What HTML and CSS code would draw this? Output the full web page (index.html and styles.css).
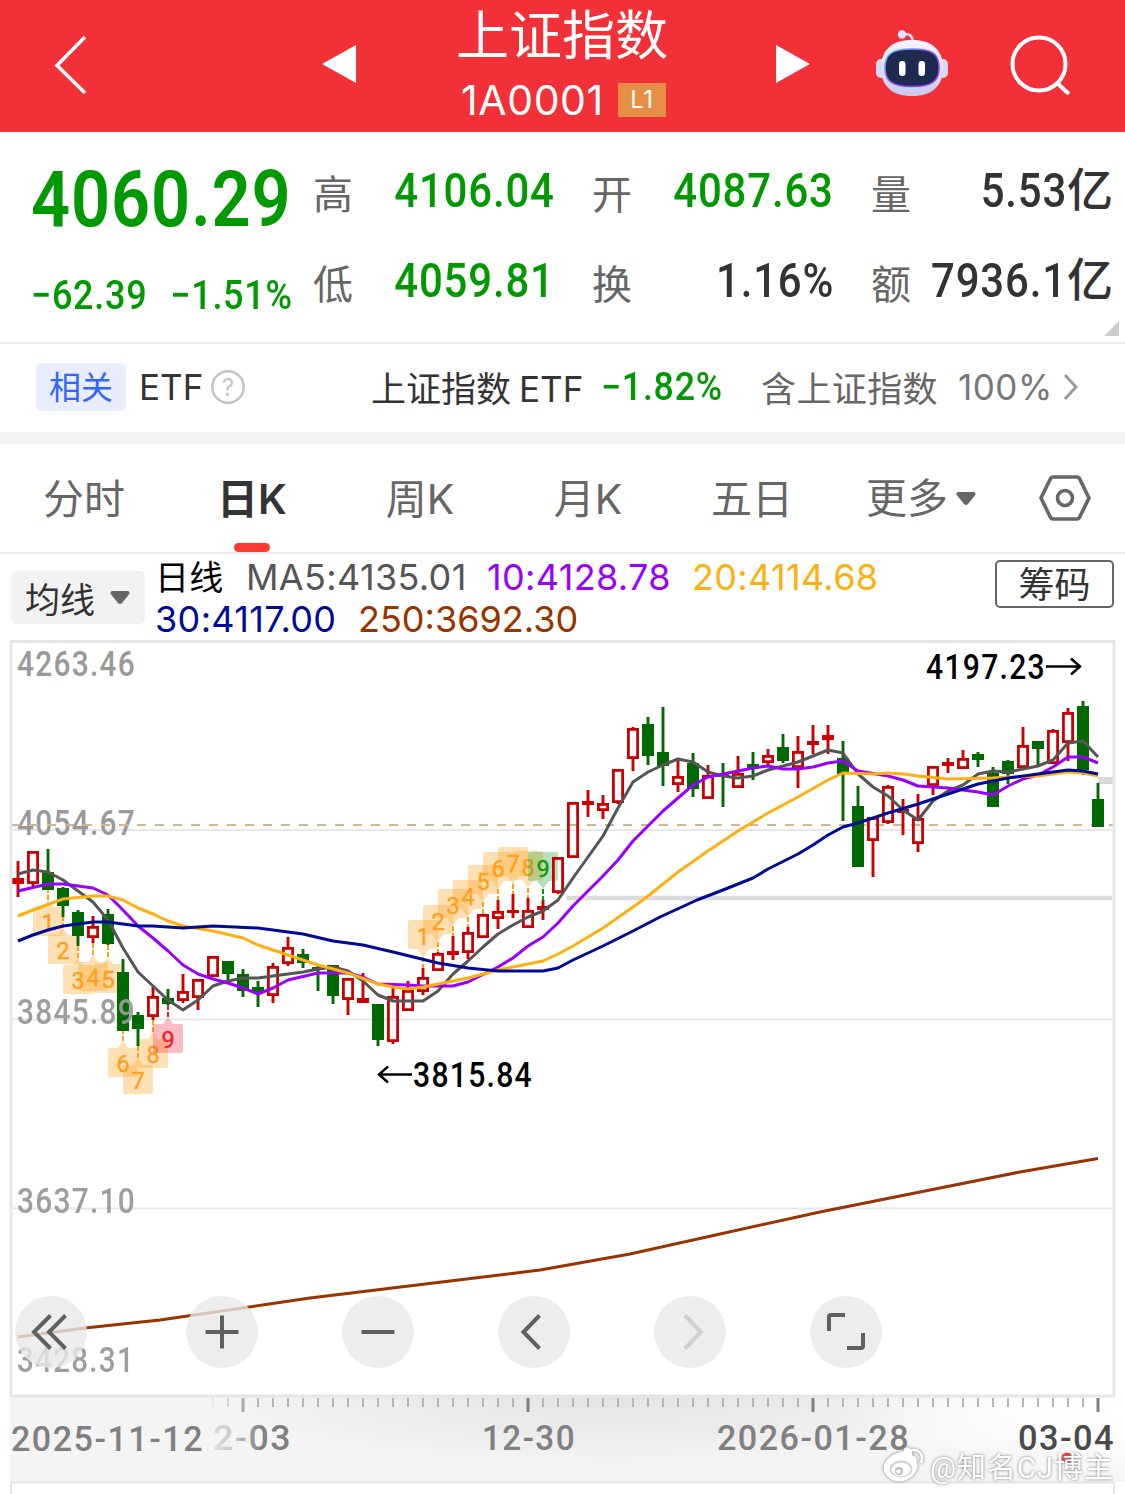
FILE: index.html
```html
<!DOCTYPE html>
<html lang="zh-CN">
<head>
<meta charset="utf-8">
<title>上证指数 1A0001</title>
<link rel="stylesheet" href="styles.css">
</head>
<body>
<header class="topbar">
  <svg class="back" width="34" height="60" viewBox="0 0 34 60"><path d="M32 2 4 30.500 32 58" fill="none" stroke="#fff" stroke-width="3.500"/></svg>
  <svg class="prev" width="34" height="38" viewBox="0 0 34 38"><path d="M34 0V38L0 19Z" fill="#fff"/></svg>
  <div class="heading">
    <h1>上证指数</h1>
    <div class="code"><span>1A0001</span><b>L1</b></div>
  </div>
  <svg class="next" width="34" height="38" viewBox="0 0 34 38"><path d="M0 0V38L34 19Z" fill="#fff"/></svg>
  <svg class="robot" width="74" height="68" viewBox="0 0 74 68">
    <defs>
      <linearGradient id="shell" x1="0" y1="0" x2="0" y2="1"><stop offset="0" stop-color="#f6f4ff"/><stop offset=".6" stop-color="#dddcf6"/><stop offset="1" stop-color="#c9c8ea"/></linearGradient>
      <linearGradient id="rim" x1="0" y1="0" x2="1" y2="1"><stop offset="0" stop-color="#58d3ee"/><stop offset=".45" stop-color="#8a4ff0"/><stop offset="1" stop-color="#7b36f5"/></linearGradient>
    </defs>
    <path d="M28 5Q38 4 37.500 13" fill="none" stroke="#e3e1f8" stroke-width="2.500"/>
    <circle cx="27" cy="5.500" r="4.200" fill="#e8e6fb"/>
    <rect x="1" y="30" width="12" height="19" rx="5" fill="#d9d8f3"/>
    <rect x="61" y="30" width="12" height="19" rx="5" fill="#d9d8f3"/>
    <path d="M37 11C57 11 68 21 68 39C68 57 57 67 37 67C17 67 6 57 6 39C6 21 17 11 37 11Z" fill="url(#shell)"/>
    <path d="M37 20C56 20 64 24 64 38.500C64 53 56 57.500 37 57.500C18 57.500 10 53 10 38.500C10 24 18 20 37 20Z" fill="#202a50" stroke="url(#rim)" stroke-width="1.600"/>
    <rect x="24" y="32" width="6.500" height="15" rx="3.200" fill="#fff"/>
    <rect x="43.500" y="32" width="6.500" height="15" rx="3.200" fill="#fff"/>
  </svg>
  <svg class="search" width="62" height="62" viewBox="0 0 62 62"><g fill="none" stroke="#fff" stroke-width="4"><circle cx="29" cy="29" r="26.500"/><path d="M47 48 59 59"/></g></svg>
</header>

<section class="quote">
  <div class="last">
    <div class="price">4060.29</div>
    <div class="change"><span>−62.39</span><span>−1.51%</span></div>
  </div>
  <dl class="stats">
    <dt>高</dt><dd class="down"><b>4106.04</b></dd><dt>开</dt><dd class="down"><b>4087.63</b></dd><dt>量</dt><dd><b>5.53</b><i>亿</i></dd>
    <dt>低</dt><dd class="down"><b>4059.81</b></dd><dt>换</dt><dd><b>1.16%</b></dd><dt>额</dt><dd><b>7936.1</b><i>亿</i></dd>
  </dl>
  <span class="corner"></span>
</section>

<section class="etf">
  <span class="tag">相关</span>
  <span class="etf-label">ETF</span>
  <svg class="help" width="36" height="36" viewBox="0 0 36 36"><circle cx="18" cy="18" r="15.800" fill="none" stroke="#c4c4c4" stroke-width="2.500"/><text x="18" y="26.500" text-anchor="middle" font-size="24">?</text></svg>
  <span class="etf-name">上证指数<em>ETF</em></span>
  <span class="etf-change">−1.82%</span>
  <span class="etf-hold">含上证指数</span>
  <span class="etf-pct">100%</span>
  <svg class="more" width="16" height="28" viewBox="0 0 16 28"><path d="M2 2 13 14 2 26" fill="none" stroke="#999" stroke-width="2.800"/></svg>
</section>

<nav class="tabs">
  <span>分时</span>
  <span class="active">日K</span>
  <span>周K</span>
  <span>月K</span>
  <span>五日</span>
  <span class="dropdown">更多<svg width="20" height="13" viewBox="0 0 20 13"><path d="M2 0H18Q21 1 18.500 4L12 12Q10 14 8 12L1.500 4Q-1 1 2 0Z" fill="#666"/></svg></span>
  <svg class="gear" width="54" height="48" viewBox="0 0 54 48"><g fill="none" stroke="#666" stroke-width="3.600"><path d="M15 3H39Q40.500 3 41.300 4.200L51 24L41.300 43.800Q40.500 45 39 45H15Q13.500 45 12.700 43.800L3 24L12.700 4.200Q13.500 3 15 3Z"/><circle cx="27" cy="24" r="7.500"/></g></svg>
</nav>

<section class="legend">
  <div class="indicator">均线<svg width="20" height="13" viewBox="0 0 20 13"><path d="M2 0H18Q21 1 18.500 4L12 12Q10 14 8 12L1.500 4Q-1 1 2 0Z" fill="#666"/></svg></div>
  <div class="averages">
    <div><span class="period">日线</span><span class="ma5">MA5:4135.01</span><span class="ma10">10:4128.78</span><span class="ma20">20:4114.68</span></div>
    <div><span class="ma30">30:4117.00</span><span class="ma250">250:3692.30</span></div>
  </div>
  <div class="chips">筹码</div>
</section>

<svg class="chart" width="1125" height="854" viewBox="0 640 1125 854">
  <defs>
    <radialGradient id="glow" gradientUnits="userSpaceOnUse" cx="0" cy="0" r="1" gradientTransform="translate(610 1397) scale(390 68)"><stop offset="0" stop-color="#e4e4e4"/><stop offset=".5" stop-color="#ebebeb"/><stop offset="1" stop-color="#f4f4f4"/></radialGradient>
    <radialGradient id="shine" gradientUnits="userSpaceOnUse" cx="0" cy="0" r="1" gradientTransform="translate(1125 1410) scale(290 75)"><stop offset="0" stop-color="#fff"/><stop offset=".4" stop-color="#fff" stop-opacity=".8"/><stop offset="1" stop-color="#fff" stop-opacity="0"/></radialGradient>
    <linearGradient id="fade" gradientUnits="userSpaceOnUse" x1="212" x2="262" y1="0" y2="0"><stop offset="0" stop-color="#e0e0e0"/><stop offset=".45" stop-color="#c4c4c4"/><stop offset="1" stop-color="#808080"/></linearGradient>
  </defs>

  <g stroke="#e8e8e8" stroke-width="2"><path d="M13 830H1112M13 1019.500H1112M13 1208.500H1112"/></g>
  <path d="M566 898H1112" stroke="#dcdcdc" stroke-width="4.500"/>
  <path d="M1098 780.500H1114" stroke="#d8d8d8" stroke-width="7"/>

  <g class="scale">
    <text x="17" y="676" textLength="119" lengthAdjust="spacingAndGlyphs">4263.46</text>
    <text x="17" y="835" textLength="119" lengthAdjust="spacingAndGlyphs">4054.67</text>
  </g>
  <path d="M11 825H1114" stroke="#d6b58a" stroke-width="2" stroke-dasharray="9 9"/>

  <g id="marks"></g>
  <g id="candles"></g>

  <g class="lines">
    <polyline stroke="#555" points="18,874 33,870 48,872 63,880 78,891 93,902 108,920 123,948 138,972 153,986 168,1000 183,1010 198,1000 213,986 228,981 243,978 258,978 273,976 288,974 303,972 318,969 333,967 348,971 363,981 378,995 393,1001 423,1001 438,991 453,974 468,961 483,947 498,934 513,925 528,917 543,911 558,900 573,878 588,857 603,836 618,808 633,782 648,772 663,765 678,759 693,762 708,772 723,776 738,778 753,776 768,770 783,766 798,762 813,756 828,750 843,753 858,774 873,787 888,796 903,810 918,820 933,801 948,791 963,785 978,774 993,771 1008,772 1023,769 1038,766 1053,760 1068,743 1083,741 1098,757"/>
    <polyline stroke="#9a00ff" points="18,891 48,884 63,884 93,888 108,895 123,910 138,926 153,938 168,951 183,965 198,974 213,979 228,983 243,988 258,994 273,988 288,980 318,973 348,973 363,977 378,984 408,985 423,986 453,986 468,982 498,967 513,958 528,946 543,937 558,923 573,906 603,876 618,860 633,841 663,811 693,785 708,777 738,771 753,768 768,766 783,769 798,769 813,767 828,763 843,761 858,771 888,776 903,780 918,786 948,788 978,792 993,795 1008,786 1023,779 1038,775 1053,767 1068,757 1083,757 1098,763"/>
    <polyline stroke="#ffb010" points="18,916 33,910 63,899 93,896 108,896 123,900 138,908 153,914 168,921 183,926 213,931 243,938 258,945 288,955 318,965 348,973 378,984 393,987 408,989 423,987 438,984 468,978 498,970 528,964 543,961 558,954 573,946 603,928 643,900 663,884 678,872 708,851 738,831 768,813 798,797 828,780 843,773 873,774 888,773 903,774 918,776 948,779 993,778 1008,777 1038,776 1068,772 1083,773 1098,776"/>
    <polyline stroke="#000a99" points="18,941 33,935 48,930 63,926 93,922 108,922 138,926 153,926 183,928 213,926 258,928 303,934 333,941 363,945 393,952 438,963 468,968 498,971 543,971 558,968 573,960 603,946 633,931 660,917 697,900 723,890 753,878 768,869 798,854 813,845 828,835 843,827 858,823 888,813 918,804 948,794 978,784 1008,778 1038,774 1068,770 1083,771 1098,774"/>
    <polyline stroke="#993300" points="18,1337 85,1328 160,1320 222,1311 310,1298 450,1281 540,1270 630,1254 720,1234 820,1212 920,1192 1020,1172 1098,1158.500"/>
  </g>

  <g class="scale over">
    <text x="17" y="1024" textLength="119" lengthAdjust="spacingAndGlyphs">3845.89</text>
    <text x="17" y="1213" textLength="119" lengthAdjust="spacingAndGlyphs">3637.10</text>
    <text x="17" y="1372" textLength="118" lengthAdjust="spacingAndGlyphs">3428.31</text>
  </g>

  <g class="extreme">
    <text x="926" y="679" textLength="120" lengthAdjust="spacingAndGlyphs">4197.23</text>
    <path d="M1046 666.500H1080M1071 658.500 1080 666.500 1071 674.500"/>
    <text x="413" y="1087" textLength="120" lengthAdjust="spacingAndGlyphs">3815.84</text>
    <path d="M412 1074.500H379M388 1066.500 379 1074.500 388 1082.500"/>
  </g>

  <g class="controls">
    <circle cx="51" cy="1332" r="36"/><circle cx="222" cy="1332" r="36"/><circle cx="378" cy="1332" r="36"/><circle cx="534" cy="1332" r="36"/><circle cx="690" cy="1332" r="36"/><circle cx="846" cy="1332" r="36"/>
    <path d="M50.500 1315.500 34 1332 50.500 1348.500M65.500 1315.500 49 1332 65.500 1348.500"/>
    <path d="M205.500 1332H238.500M222 1315.500V1348.500M361.500 1332H394.500M539.500 1315.500 523.500 1332 539.500 1348.500"/>
    <path class="off" d="M685 1315.500 701 1332 685 1348.500"/>
    <path d="M829 1331V1317Q829 1315 831 1315H845M863 1333V1346Q863 1348 861 1348H847"/>
  </g>

  <rect x="10" y="1397" width="1115" height="85" fill="#f4f4f4"/>
  <rect x="220" y="1397" width="780" height="70" fill="url(#glow)"/>
  <rect x="835" y="1397" width="290" height="85" fill="url(#shine)"/>
  <g id="ticks"></g>
  <g class="dates">
    <text class="faded" x="213" y="1450" textLength="79" lengthAdjust="spacingAndGlyphs">2-03</text>
    <text x="11" y="1451" textLength="193" lengthAdjust="spacingAndGlyphs">2025-11-12</text>
    <text x="482" y="1450" textLength="94" lengthAdjust="spacingAndGlyphs">12-30</text>
    <text x="717" y="1450" textLength="193" lengthAdjust="spacingAndGlyphs">2026-01-28</text>
    <text class="today" x="1018" y="1450" textLength="97" lengthAdjust="spacingAndGlyphs">03-04</text>
  </g>
  <path d="M11 641.500H1114V1396H11Z" fill="none" stroke="#e6e6e6" stroke-width="2.800"/>
  <rect x="10" y="1482" width="1105" height="12" fill="#fff"/>
  <path d="M11 1494V1482.500H1114V1494" fill="none" stroke="#e6e6e6" stroke-width="2"/>

  <circle cx="1067" cy="1458" r="5.500" fill="#e8413c"/>
  <g class="watermark">
    <path d="M887 1476C878 1466 888 1454 904 1451C904 1448 906 1446 909 1448C914 1449 911 1456 914 1459C921 1463 917 1476 906 1480C899 1483 891 1481 887 1476Z"/>
    <ellipse cx="901" cy="1469" rx="11.500" ry="8.500" fill="#d4d4d4"/><ellipse cx="901" cy="1469.500" rx="9.500" ry="6.800"/><circle cx="899" cy="1471" r="4" fill="#bbb"/><circle cx="898.500" cy="1471.500" r="2.300"/>
    <path class="wave" d="M910 1450.500C919 1448 924 1455 921 1463M911 1457C915 1456 916 1459 915 1462"/>
    <text x="930" y="1478" textLength="183">@知名CJ博主</text>
  </g>
</svg>
<script src="chart.js"></script>
</body>
</html>
```
FILE: styles.css
```css
* { box-sizing: border-box; }
body { margin: 0; width: 1125px; height: 1494px; overflow: hidden; background: #fff; color: #333; font-family: Inter, "Noto Sans CJK SC", sans-serif; }
svg { display: block; flex: none; }

.topbar { display: flex; height: 132px; background: #f23038; color: #fff; }
.back { margin: 35px 0 0 53px; }
.prev { margin: 45px 0 0 235px; }
.heading { width: 212px; margin-left: 100px; }
.heading h1 { margin: 0; height: 70px; font-size: 53px; line-height: 72px; font-weight: 400; white-space: nowrap; }
.code { display: flex; align-items: center; justify-content: space-between; height: 60px; padding: 0 2px 0 5px; font-size: 41px; line-height: 60px; letter-spacing: .6px; }
.code span { margin-top: -1px; }
.code b { width: 48px; height: 34px; background: #e58e48; font-size: 24px; line-height: 34px; font-weight: 400; text-align: center; }
.next { margin: 45px 0 0 108px; }
.robot { margin: 29px 0 0 65px; }
.search { margin: 35px 0 0 61px; }

.quote { position: relative; display: flex; height: 212px; border-bottom: 2px solid #ececec; font-family: Roboto, "Noto Sans CJK SC", sans-serif; font-weight: 500; }
.last { width: 313px; padding: 22px 0 0 31px; color: #090; }
.price { width: 282px; height: 92px; font-size: 77px; line-height: 93px; font-weight: 600; letter-spacing: 1px; transform: scaleX(.89); transform-origin: left; }
.change { display: flex; justify-content: space-between; width: 298px; margin-top: 22px; font-size: 41px; line-height: 54px; letter-spacing: .8px; transform: scaleX(.878); transform-origin: left; }
.stats { display: grid; grid-template-columns: 40px 202px 77px 202px 77px 202px; grid-template-rows: 90px 90px; width: 800px; margin: 13px 0 0; }
.stats dt { padding-top: 9px; font-size: 40px; line-height: 84px; font-weight: 400; color: #666; text-align: right; }
.stats dd { display: flex; justify-content: flex-end; margin: 0; font-size: 49px; line-height: 91px; white-space: nowrap; }
.stats dd b { font-weight: 500; letter-spacing: 1px; transform: scaleX(.855); transform-origin: right; }
.stats i { font-size: 46px; font-style: normal; }
.stats .down { color: #090; }
.corner { position: absolute; right: 6px; bottom: 6px; border-left: 15px solid transparent; border-bottom: 15px solid #ccc; }

.etf { display: flex; align-items: center; height: 100px; padding: 0 0 2px 36px; border-bottom: 12px solid #f4f4f4; font-size: 35px; white-space: nowrap; }
.tag { width: 90px; height: 48px; border-radius: 6px; background: #e8eeff; color: #3465ff; font-size: 32px; line-height: 49px; text-align: center; }
.etf-label { width: 71px; margin-left: 13px; }
.help { fill: #c4c4c4; }
.etf-name { width: 230px; margin: -2px 0 0 125px; }
.etf-name em { margin-left: 8px; font-style: normal; }
.etf-change { width: 160px; color: #090; font: 500 38px Roboto, sans-serif; letter-spacing: .8px; transform: scaleX(.94); transform-origin: left; }
.etf-hold { width: 197px; margin-top: -2px; color: #666; letter-spacing: .4px; }
.etf-pct { width: 105px; color: #777; letter-spacing: .5px; }

.tabs { display: grid; grid-template-columns: 168px 168px 168px 168px 160px 178px 109px; align-items: center; height: 110px; border-bottom: 2px solid #ececec; font-size: 41px; color: #666; }
.tabs > span { position: relative; height: 108px; line-height: 110px; text-align: center; }
.tabs .active { color: #333; font-weight: 600; }
.tabs .active::after { content: ""; position: absolute; left: 66px; bottom: 0; width: 36px; height: 9px; border-radius: 5px; background: #fc3a30; }
.tabs .dropdown { display: flex; align-items: center; justify-content: center; gap: 8px; }
.gear { justify-self: center; }

.legend { display: flex; height: 86px; }
.indicator { display: flex; align-items: center; gap: 15px; width: 134px; height: 53px; margin: 17px 0 0 11px; padding: 0 0 1px 14px; border-radius: 5px; background: #f2f2f2; font-size: 35px; }
.averages { width: 850px; padding: 2px 0 0 10px; font-size: 36px; line-height: 42px; letter-spacing: .35px; white-space: nowrap; }
.averages div { display: flex; height: 42px; }
.period { width: 91px; color: #000; font-size: 34px; line-height: 43px; }
.ma5 { width: 241px; color: #555; }
.ma10 { width: 205px; color: #9a00ff; }
.ma20 { color: #ffb010; }
.ma30 { width: 203px; color: #000a99; }
.ma250 { color: #993300; letter-spacing: 0; }
.chips { width: 119px; height: 48px; margin-top: 6px; border: 2px solid #666; border-radius: 5px; font-size: 36px; line-height: 47px; text-align: center; }

.chart text { font-family: Roboto, "Noto Sans CJK SC", sans-serif; font-weight: 500; }
.scale text, .extreme text, .dates text { letter-spacing: 1.500px; }
.scale text { font-size: 35px; fill: #999; }
.over { opacity: .95; }
.lines polyline { fill: none; stroke-width: 3; stroke-linejoin: round; }
.extreme text { font-size: 35px; fill: #000; }
.extreme path { fill: none; stroke: #000; stroke-width: 2.500; }
.controls circle { fill: #e8e8e8; fill-opacity: .8; }
.controls path { fill: none; stroke: #606060; stroke-width: 4; }
.controls .off { stroke: #d0d0d0; }
.dates text { font-size: 35px; fill: #808080; }
.dates .today { fill: #4a4a4a; }
.dates .faded { fill: url(#fade); }
.chart .mark text { font-size: 23.500px; font-weight: 400; text-anchor: middle; stroke-width: .4px; }
.watermark { fill: #fff; filter: drop-shadow(0 0 1.500px #777); }
.watermark .wave { fill: none; stroke: #fff; stroke-width: 2.500; }
.chart .watermark text { font-size: 29px; font-weight: 400; }
```
FILE: chart.js
```js
const NS = "http://www.w3.org/2000/svg";
const el = (parent, name, attrs) => {
  const node = document.createElementNS(NS, name);
  for (const key in attrs) node.setAttribute(key, attrs[key]);
  document.getElementById(parent).appendChild(node);
  return node;
};

// direction, high, body top, body bottom, low
const candles = `r 861 878 884 897,r 851 851 884 886,g 849 872 890 890,g 887 888 906 917,g 910 912 936 946,r 916 926 938 943,g 909 914 944 945,g 959 972 1031 1031,g 1012 1015 1029 1046,r 987 996 1017 1020,g 989 998 1004 1005,r 974 991 1001 1003,r 979 979 998 1010,r 956 956 977 977,g 961 961 974 981,g 969 974 991 997,g 981 987 992 1007,r 963 966 996 1003,r 937 947 964 966,g 949 954 963 968,g 965 967 970 991,g 965 965 996 1004,r 978 978 1000 1015,r 973 998 1003 1003,g 1004 1004 1040 1046,r 988 996 1042 1044,r 981 990 1011 1011,r 968 977 992 995,r 952 953 971 971,r 936 951 955 960,r 927 932 953 959,r 914 914 938 938,r 900 911 919 929,r 894 910 913 918,r 898 910 928 928,r 900 906 910 920,r 857 857 893 894,r 802 802 858 858,r 790 801 805 817,r 795 803 811 819,r 769 769 803 804,r 727 728 759 771,g 717 724 756 765,g 707 752 766 786,r 760 776 785 792,g 753 763 789 797,r 765 775 799 799,g 763 774 777 807,r 756 773 788 788,g 752 764 768 780,r 749 755 763 765,g 734 747 761 763,r 736 751 768 788,r 725 741 745 754,r 725 735 740 754,g 741 758 774 821,g 786 806 867 867,r 817 817 841 877,r 785 786 823 824,r 799 809 813 835,r 794 818 844 852,r 766 766 786 795,r 758 762 766 773,r 750 758 769 769,g 752 754 760 767,g 767 773 807 807,g 760 761 774 784,r 727 745 768 768,g 741 741 749 765,r 729 730 764 764,r 708 712 743 761,g 701 706 770 775,g 783 799 827 827`.split(",");

candles.forEach((row, i) => {
  const [dir, ...v] = row.split(" ");
  const [high, top, bottom, low] = v.map(Number);
  const x = 18 + 15 * i, color = dir === "r" ? "#cc0000" : "#006a00";
  el("candles", "path", { d: `M${x} ${high}V${top}M${x} ${bottom}V${low}`, stroke: color, "stroke-width": 2.9 });
  if (dir === "r" && bottom - top > 6)
    el("candles", "rect", { x: x - 4.6, y: top + 1.4, width: 9.2, height: bottom - top - 2.8, fill: "none", stroke: color, "stroke-width": 2.8 });
  else
    el("candles", "rect", { x: x - 6, y: top, width: 12, height: bottom - top, fill: color });
});

// candle index, count, top of the box, wick end, direction of the pointer
const marks = [
  [2, 1, 907, 890, "up"], [3, 2, 935, 917, "up"], [4, 3, 965, 946, "up"], [5, 4, 962, 943, "up"], [6, 5, 964, 945, "up"],
  [7, 6, 1048, 1031, "up"], [8, 7, 1065, 1046, "up"], [9, 8, 1039, 1020, "up"], [10, 9, 1024, 1005, "up"],
  [27, 1, 920, 968, "down"], [28, 2, 905, 952, "down"], [29, 3, 889, 936, "down"], [30, 4, 880, 927, "down"], [31, 5, 865, 914, "down"],
  [32, 6, 852, 900, "down"], [33, 7, 847, 894, "down"], [34, 8, 851, 898, "down"], [35, 9, 852, 900, "down"]
];
marks.forEach(([i, n, y, wick, way]) => {
  const x = 18 + 15 * i;
  const color = n < 9 ? "#ff9f1a" : way === "up" ? "#e8252f" : "#0a9a0a";
  const box = n < 9 ? "#ff9f1a" : way === "up" ? "#ee3540" : "#22a32a";
  const d = way === "up"
    ? `M${x - 13} ${y}H${x - 5}L${x} ${y - 7}L${x + 5} ${y}H${x + 13}Q${x + 15} ${y} ${x + 15} ${y + 2}V${y + 27}Q${x + 15} ${y + 29} ${x + 13} ${y + 29}H${x - 13}Q${x - 15} ${y + 29} ${x - 15} ${y + 27}V${y + 2}Q${x - 15} ${y} ${x - 13} ${y}Z`
    : `M${x - 13} ${y}H${x + 13}Q${x + 15} ${y} ${x + 15} ${y + 2}V${y + 27}Q${x + 15} ${y + 29} ${x + 13} ${y + 29}H${x + 6}L${x} ${y + 37}L${x - 6} ${y + 29}H${x - 13}Q${x - 15} ${y + 29} ${x - 15} ${y + 27}V${y + 2}Q${x - 15} ${y} ${x - 13} ${y}Z`;
  el("marks", "path", { d, fill: box, "fill-opacity": 0.32 });
  el("marks", "path", { d: `M${x} ${way === "up" ? y - 7 : y + 37}V${wick}`, stroke: color, "stroke-width": 2, "stroke-dasharray": "5 2" });
  const group = el("marks", "g", { class: "mark" });
  const label = document.createElementNS(NS, "text");
  label.setAttribute("x", x);
  label.setAttribute("y", y + (way === "up" ? 24 : 24.5));
  label.setAttribute("fill", color);
  label.setAttribute("stroke", color);
  label.textContent = n;
  group.appendChild(label);
});

for (let i = 13; i <= 72; i++) {
  const major = (72 - i) % 19 === 0;
  const x = 18 + 15 * i;
  el("ticks", "path", {
    d: `M${x} 1398V${major ? 1412 : 1407}`,
    stroke: major ? (i === 15 ? "#aaa" : "#808080") : "#b5b5b5",
    "stroke-width": major ? 3 : 2,
    opacity: i === 13 ? 0.2 : i === 14 ? 0.5 : 1
  });
}
```
